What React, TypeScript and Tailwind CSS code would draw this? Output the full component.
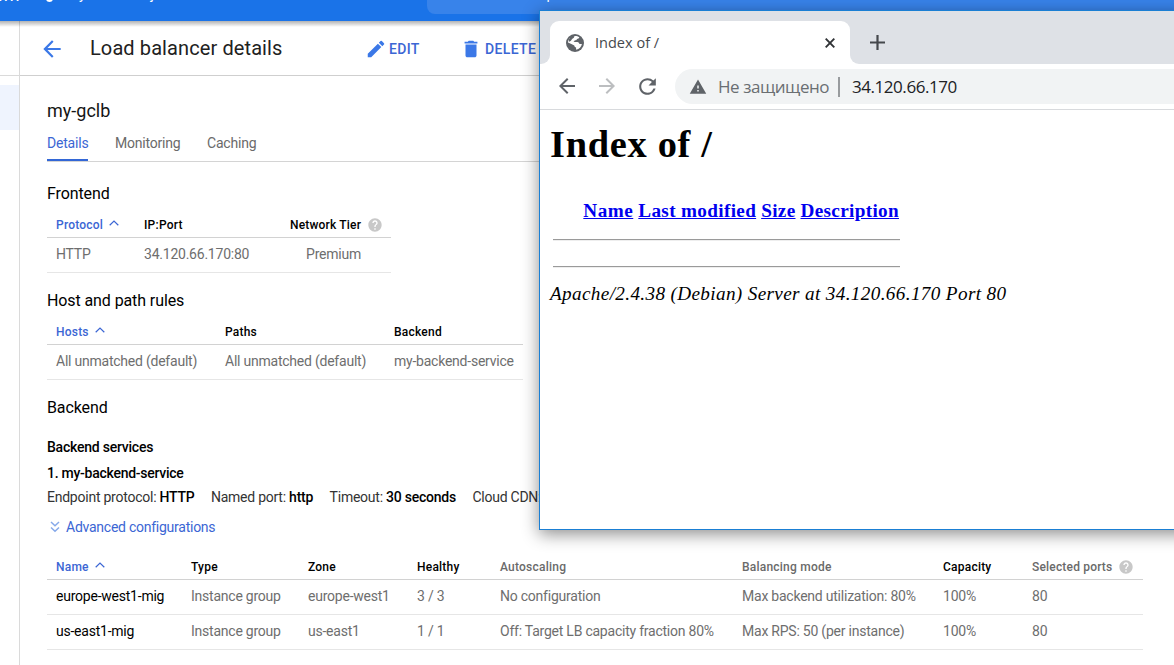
import React from "react";
import { MdArrowBack, MdArrowForward, MdEdit, MdDelete, MdHelp, MdRefresh, MdWarning, MdSearch } from "react-icons/md";

function SortLabel({ children }: { children: React.ReactNode }) {
  return (
    <div className="flex items-center gap-[6px] text-[#3b66d4]">
      <span>{children}</span>
      <svg width="10" height="6" viewBox="0 0 10 6" className="mb-[3px]" fill="none" stroke="currentColor" strokeWidth="1.2">
        <path d="M0.7 5.2 5 1l4.3 4.2" />
      </svg>
    </div>
  );
}

const HEAD = "grid h-[25px] items-center border-b border-[#d2d2d2] pl-[9px] pb-[1px] text-[12px] font-medium tracking-[0.22px] text-black";
const ROW = "grid h-[35px] items-center border-b border-[#e6e6e6] pl-[9px] pb-[2px] text-[14px] tracking-[-0.23px] text-[#6e6e6e]";
const H3 = "h-[20px] text-[16px] leading-[20px] tracking-[-0.1px]";
const T1 = "grid-cols-[88px_146px_1fr]";
const T2 = "grid-cols-[169px_169px_1fr]";
const T3 = "grid-cols-[135px_117px_109px_83px_242px_201px_89px_1fr]";

const GROUPS = [
  ["europe-west1-mig", "Instance group", "europe-west1", "3 / 3", "No configuration", "Max backend utilization: 80%", "100%", "80"],
  ["us-east1-mig", "Instance group", "us-east1", "1 / 1", "Off: Target LB capacity fraction 80%", "Max RPS: 50 (per instance)", "100%", "80"],
];

function TopBar() {
  return (
    <header className="relative z-10 h-[21px] shrink-0 overflow-hidden bg-[#1a73e8] text-white">
      <div className="-mt-[16px] flex items-start whitespace-nowrap text-[14px] leading-[20px]">
        <span className="-ml-[46px] -mt-px w-[92px] shrink-0 text-[18px] leading-[24px] tracking-[-0.6px]">Platform</span>
        <span className="mt-[11px] h-[7px] w-[7px] shrink-0 rounded-full bg-white" />
        <span className="w-[374px] shrink-0 pl-[13px] tracking-[0.8px]">My First Project</span>
        <div className="flex h-[30px] w-[760px] shrink-0 items-start rounded-lg bg-[#3883ea] pl-[22px]">
          <MdSearch size={18} />
          <span className="ml-[33px]">Search products and resources</span>
        </div>
      </div>
    </header>
  );
}

function Details() {
  return (
    <section className="flex flex-col pl-[27px]">
      <h2 className="mt-[25px] h-[20px] text-[18px] leading-[20px] text-[#151515]">my-gclb</h2>
      <nav className="flex h-[41px] gap-[27px] border-b border-[#d4d4d4] text-[14px] tracking-[-0.2px] text-[#6a6a6a]">
        <div className="relative h-[40px] w-[41px] pt-[12px] leading-[20px] text-[#3b66d4]">
          Details
          <span className="absolute bottom-0 left-0 h-[2px] w-full bg-[#3367d6]" />
        </div>
        <div className="w-[65px] pt-[12px] leading-[20px]">Monitoring</div>
        <div className="pt-[12px] leading-[20px]">Caching</div>
      </nav>

      <h3 className={`mt-[22px] ${H3}`}>Frontend</h3>
      <div className="mt-[9px] w-[344px]">
        <div className={`${HEAD} ${T1}`}>
          <SortLabel>Protocol</SortLabel>
          <span>IP:Port</span>
          <div className="flex items-center gap-[6px]">
            <span className="tracking-[0.18px]">Network Tier</span>
            <MdHelp size={16} className="text-[#c8c8c8]" />
          </div>
        </div>
        <div className={`${ROW} ${T1}`}>
          <span>HTTP</span>
          <span>34.120.66.170:80</span>
          <span className="w-[71px] text-right">Premium</span>
        </div>
      </div>

      <h3 className={`mt-[18px] ${H3}`}>Host and path rules</h3>
      <div className="mt-[9px] w-[476px]">
        <div className={`${HEAD} ${T2}`}>
          <SortLabel>Hosts</SortLabel>
          <span>Paths</span>
          <span>Backend</span>
        </div>
        <div className={`${ROW} ${T2}`}>
          <span>All unmatched (default)</span>
          <span>All unmatched (default)</span>
          <span>my-backend-service</span>
        </div>
      </div>

      <h3 className={`mt-[18px] ${H3}`}>Backend</h3>
      <h4 className="mt-[19px] h-[20px] text-[14px] font-medium leading-[20px] tracking-[-0.23px]">Backend services</h4>
      <h4 className="mt-[6px] h-[20px] text-[14px] font-medium leading-[20px] tracking-[-0.26px]">1. my-backend-service</h4>
      <div className="mt-[4px] flex h-[20px] gap-[16.5px] whitespace-nowrap text-[14px] leading-[20px] tracking-[-0.24px] text-[#333]">
        <span>Endpoint protocol: <b className="font-medium text-black">HTTP</b></span>
        <span>Named port: <b className="font-medium text-black">http</b></span>
        <span>Timeout: <b className="font-medium text-black">30 seconds</b></span>
        <span>Cloud CDN: <b className="font-medium text-black">disabled</b></span>
      </div>
      <div className="mt-[10px] flex h-[20px] items-center gap-[6px] pl-[3px] text-[14px] leading-[20px] tracking-[-0.25px] text-[#3b66d4]">
        <svg width="10" height="12" viewBox="0 0 10 12" fill="none" stroke="#86a9ea" strokeWidth="1.5">
          <path d="M1 1l4 3.700L9 1M1 6.500l4 3.700 4-3.700" />
        </svg>
        <span>Advanced configurations</span>
      </div>

      <div className="mt-[18px] w-[1096px]">
        <div className={`${HEAD} ${T3}`}>
          <SortLabel>Name</SortLabel>
          <span>Type</span>
          <span>Zone</span>
          <span>Healthy</span>
          <span className="text-[#6a6a6a]">Autoscaling</span>
          <span className="text-[#6a6a6a]">Balancing mode</span>
          <span>Capacity</span>
          <div className="flex items-center gap-[6px] text-[#6a6a6a]">
            <span className="tracking-[0.18px]">Selected ports</span>
            <MdHelp size={16} className="text-[#c8c8c8]" />
          </div>
        </div>
        {GROUPS.map((g) => (
          <div key={g[0]} className={`${ROW} ${T3}`}>
            {g.map((c, i) => (
              <span key={i} className={i === 0 ? "text-black" : ""}>{c}</span>
            ))}
          </div>
        ))}
      </div>
    </section>
  );
}

function Console() {
  return (
    <div className="flex flex-1">
      <aside className="w-[20px] shrink-0 border-r border-[#dadada] bg-white">
        <div className="h-[55px] border-b border-[#dadada]" />
        <div className="mt-[9px] h-[45px] bg-[#eff4fe]" />
      </aside>
      <main className="min-w-0 flex-1">
        <div className="flex h-[55px] items-center border-b border-[#cfcfcf] pt-px text-[#3b66d4]">
          <MdArrowBack size={26} className="ml-[19px] shrink-0 text-[#3b78e7]" />
          <h1 className="ml-[25px] w-[275px] shrink-0 pb-px text-[20px] tracking-[0.1px] text-[#212121]">Load balancer details</h1>
          <MdEdit size={22} className="shrink-0 text-[#3b78e7]" />
          <span className="ml-[2px] w-[71px] shrink-0 pt-[2px] text-[14px] font-medium tracking-[0.35px]">EDIT</span>
          <MdDelete size={22} className="shrink-0 text-[#3b78e7]" />
          <span className="ml-[3px] shrink-0 pt-[2px] text-[14px] font-medium tracking-[0.35px]">DELETE</span>
        </div>
        <Details />
      </main>
    </div>
  );
}

function Globe() {
  return (
    <svg width="18" height="18" viewBox="0 0 18 18">
      <circle cx="9" cy="9" r="9" fill="#5f6368" />
      <path d="M8.2 2.1C10 1.8 12 2.3 13.3 3.3c-.2 1.2-1.2 1.7-2.3 1.7-.3 1.3-1.3 1.3-2.4 1.5-.2.8-.6 1.2-1.3 1.5h4c1.5.1 1.7 1.1 2.2 2 .8.2 1.6.1 2.4-.1-.5 2.9-2.7 5.2-5.6 5.9-.4-.8-.2-1.5-.2-2.3-1.1-.2-1.7-.8-1.8-2C6.500 10.600 4.300 9.400 2 8.600c.1-1.900.8-3.300 1.900-4.500 1.500.700 3.300-.400 4.300-2z" fill="#fff" />
      <path d="M2.700 5.500C4.300 2.800 6.500 2 8.400 1.900c.2 1.700-1.600 2.200-2.500 3.400-.6.9-1.100 2-2.800 2.500z" fill="#5f6368" />
    </svg>
  );
}

function BrowserWindow() {
  return (
    <div className="absolute left-[539px] top-[10px] z-20 flex h-[520px] w-[700px] flex-col border border-[#1a7fd4] bg-white shadow-[0_4px_16px_rgba(0,0,0,0.45)]">
      <div className="flex h-[53px] shrink-0 bg-white">
        <div className="w-[10px] shrink-0 rounded-br-[9px] bg-[#dee1e6]" />
        <div className="flex w-[300px] shrink-0 bg-[#dee1e6]">
          <div className="mt-[10px] flex w-full items-center rounded-t-[9px] bg-white pl-[16px] pr-[15px]">
            <Globe />
            <span className="ml-[11px] flex-1 font-['Open_Sans',sans-serif] text-[14.5px] tracking-[0.02px] text-[#45494d]">Index of /</span>
            <svg width="10" height="10" viewBox="0 0 10 10" stroke="#303336" strokeWidth="1.9">
              <path d="M.7.7l8.600 8.600M9.300.7L.7 9.300" />
            </svg>
          </div>
        </div>
        <div className="flex flex-1 items-center rounded-bl-[9px] bg-[#dee1e6] pl-[20px] pt-[10px]">
          <svg width="15" height="15" viewBox="0 0 15 15" stroke="#45484c" strokeWidth="2.2">
            <path d="M7.500 0v15M0 7.500h15" />
          </svg>
        </div>
      </div>
      <div className="flex h-[46px] shrink-0 items-center border-b border-[#d8dadd] text-[#5f6368]">
        <MdArrowBack size={24} className="ml-[15px] -mt-px" />
        <MdArrowForward size={24} className="ml-[16px] -mt-px text-[#bcbec0]" />
        <MdRefresh size={25} className="ml-[16px] -mt-px" />
        <div className="ml-[15px] flex h-[35px] flex-1 items-center whitespace-nowrap rounded-l-full bg-[#f1f3f4] pl-[14px] font-['Open_Sans',sans-serif]">
          <MdWarning size={18} />
          <span className="ml-[11px] w-[112px] text-[17px] tracking-[-0.45px] text-[#6a6e72]">Не защищено</span>
          <span className="ml-[8px] h-[20px] w-[2px] bg-[#989b9e]" />
          <span className="ml-[12px] text-[17px] tracking-[-0.45px] text-[#202124]">34.120.66.170</span>
        </div>
      </div>
      <div className="pl-[10px] font-['Liberation_Serif',serif] text-black">
        <h1 className="mt-[11px] h-[46px] text-[38.4px] font-bold leading-[46px] tracking-[0.7px]">Index of /</h1>
        <div className="ml-[3px] w-[347px]">
          <div className="mt-[34px] flex h-[20px] justify-end gap-[5px] whitespace-nowrap pr-px text-[19.2px] font-bold leading-[20px] tracking-[0.33px] text-[#0000ee]">
            <a className="w-[50px] tracking-[0.5px] underline">Name</a>
            <a className="underline">Last modified</a>
            <a className="underline">Size</a>
            <a className="underline">Description</a>
          </div>
          <div className="mt-[18px] h-[2px] border-t border-b border-t-[#9a9a9a] border-b-[#eeeeee]" />
          <div className="mt-[25px] h-[2px] border-t border-b border-t-[#9a9a9a] border-b-[#eeeeee]" />
        </div>
        <address className="mt-[15px] whitespace-nowrap text-[19.2px] italic leading-[22px] tracking-[0.35px]">Apache/2.4.38 (Debian) Server at 34.120.66.170 Port 80</address>
      </div>
    </div>
  );
}

export default function App() {
  return (
    <div className="relative flex h-[665px] w-[1174px] flex-col overflow-hidden bg-white font-['Roboto',sans-serif] text-black">
      <TopBar />
      <div className="relative flex flex-1 before:absolute before:inset-x-0 before:top-0 before:h-[6px] before:bg-linear-to-b before:from-black/30 before:to-transparent">
        <Console />
      </div>
      <BrowserWindow />
    </div>
  );
}
